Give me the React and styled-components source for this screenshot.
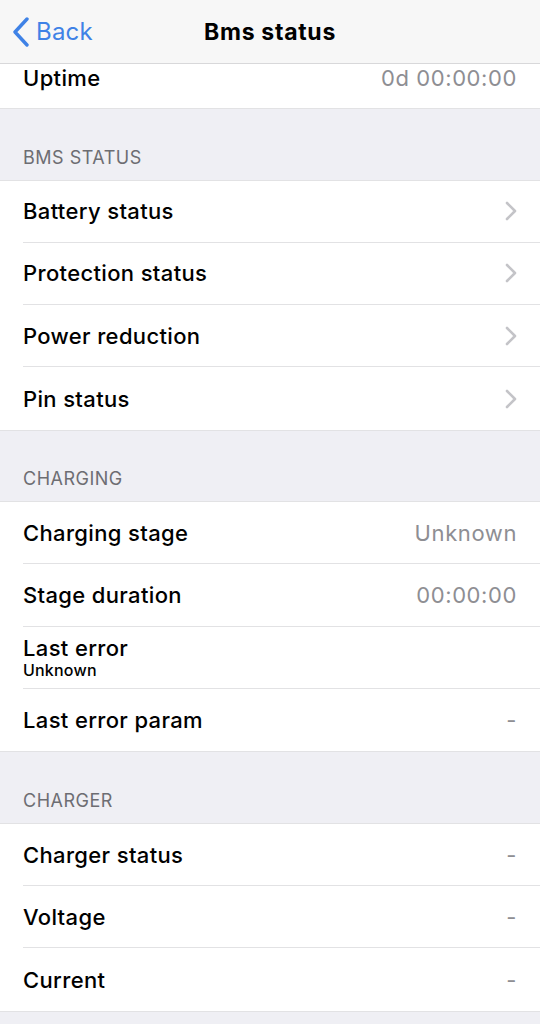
import React from 'react';
import styled, { createGlobalStyle } from 'styled-components';

const GlobalStyle = createGlobalStyle`
  html, body {
    margin: 0;
    padding: 0;
    background: #efeff4;
  }
  body {
    font-family: Inter, "Open Sans", "Liberation Sans", sans-serif;
    -webkit-font-smoothing: antialiased;
  }
`;

const Screen = styled.div`
  width: 540px;
  min-height: 1024px;
  background: #efeff4;
  display: flex;
  flex-direction: column;
`;

const NavBar = styled.header`
  height: 64px;
  box-sizing: border-box;
  background: #f7f7f7;
  border-bottom: 1px solid #d8d8da;
  display: grid;
  grid-template-columns: 1fr auto 1fr;
  align-items: center;
`;

const BackButton = styled.div`
  display: flex;
  align-items: center;
  gap: 6px;
  padding-left: 12px;
  color: #3f82e6;
  font-size: 24px;
  letter-spacing: 0.2px;
`;

const Title = styled.h1`
  margin: 0;
  font-size: 23px;
  font-weight: 700;
  letter-spacing: 0.7px;
  color: #000;
`;

const Group = styled.section`
  flex-shrink: 0;
  background: #fff;
  border-top: ${(p) => (p.top ? 'none' : '1px solid #e2e2e4')};
  border-bottom: 1px solid #e2e2e4;
`;

const SectionHeader = styled.div`
  flex-shrink: 0;
  height: 70.5px;
  box-sizing: border-box;
  padding: 0 23px 12px;
  display: flex;
  align-items: flex-end;
  font-size: 18px;
  color: #6d6d72;
  letter-spacing: 0.5px;
`;

const Row = styled.div`
  height: ${(p) => (p.clipped ? 44 : 62.3)}px;
  box-sizing: border-box;
  margin-left: 23px;
  padding-right: 23px;
  display: flex;
  align-items: ${(p) => (p.clipped ? 'flex-start' : 'center')};
  padding-top: ${(p) => (p.clipped ? 1 : 0)}px;
  justify-content: space-between;
  border-bottom: ${(p) => (p.last ? 'none' : '1px solid #e2e2e4')};
`;

const Label = styled.div`
  display: flex;
  flex-direction: column;
  font-size: 22px;
  font-weight: 500;
  letter-spacing: 0.35px;
  color: #000;
  line-height: 26px;
`;

const SubLabel = styled.span`
  font-size: 16px;
  font-weight: 500;
  line-height: 18px;
  letter-spacing: 0.2px;
  color: #000;
`;

const Value = styled.span`
  font-size: 22px;
  color: #8e8e93;
  letter-spacing: 0.6px;
`;

const Chevron = () => (
  <svg width="12" height="20" viewBox="0 0 12 20" fill="none">
    <path d="M2 2l8 8-8 8" stroke="#c4c4c8" strokeWidth="2.6" strokeLinecap="round" strokeLinejoin="round" />
  </svg>
);

const BackChevron = () => (
  <svg width="18" height="30" viewBox="0 0 18 30" fill="none">
    <path d="M15 2L3 15l12 13" stroke="#3f82e6" strokeWidth="3.4" strokeLinecap="round" strokeLinejoin="round" />
  </svg>
);

const sections = [
  {
    title: 'BMS STATUS',
    rows: [
      { label: 'Battery status', chevron: true },
      { label: 'Protection status', chevron: true },
      { label: 'Power reduction', chevron: true },
      { label: 'Pin status', chevron: true },
    ],
  },
  {
    title: 'CHARGING',
    rows: [
      { label: 'Charging stage', value: 'Unknown' },
      { label: 'Stage duration', value: '00:00:00' },
      { label: 'Last error', sub: 'Unknown' },
      { label: 'Last error param', value: '-' },
    ],
  },
  {
    title: 'CHARGER',
    rows: [
      { label: 'Charger status', value: '-' },
      { label: 'Voltage', value: '-' },
      { label: 'Current', value: '-' },
    ],
  },
];

export default function App() {
  return (
    <Screen>
      <GlobalStyle />
      <NavBar>
        <BackButton>
          <BackChevron />
          Back
        </BackButton>
        <Title>Bms status</Title>
        <div />
      </NavBar>
      <Group top>
        <Row clipped last>
          <Label>Uptime</Label>
          <Value>0d 00:00:00</Value>
        </Row>
      </Group>
      {sections.map((section) => (
        <React.Fragment key={section.title}>
          <SectionHeader>{section.title}</SectionHeader>
          <Group>
            {section.rows.map((row, i) => (
              <Row key={row.label} last={i === section.rows.length - 1}>
                <Label>
                  {row.label}
                  {row.sub && <SubLabel>{row.sub}</SubLabel>}
                </Label>
                {row.chevron ? <Chevron /> : row.value && <Value>{row.value}</Value>}
              </Row>
            ))}
          </Group>
        </React.Fragment>
      ))}
    </Screen>
  );
}
